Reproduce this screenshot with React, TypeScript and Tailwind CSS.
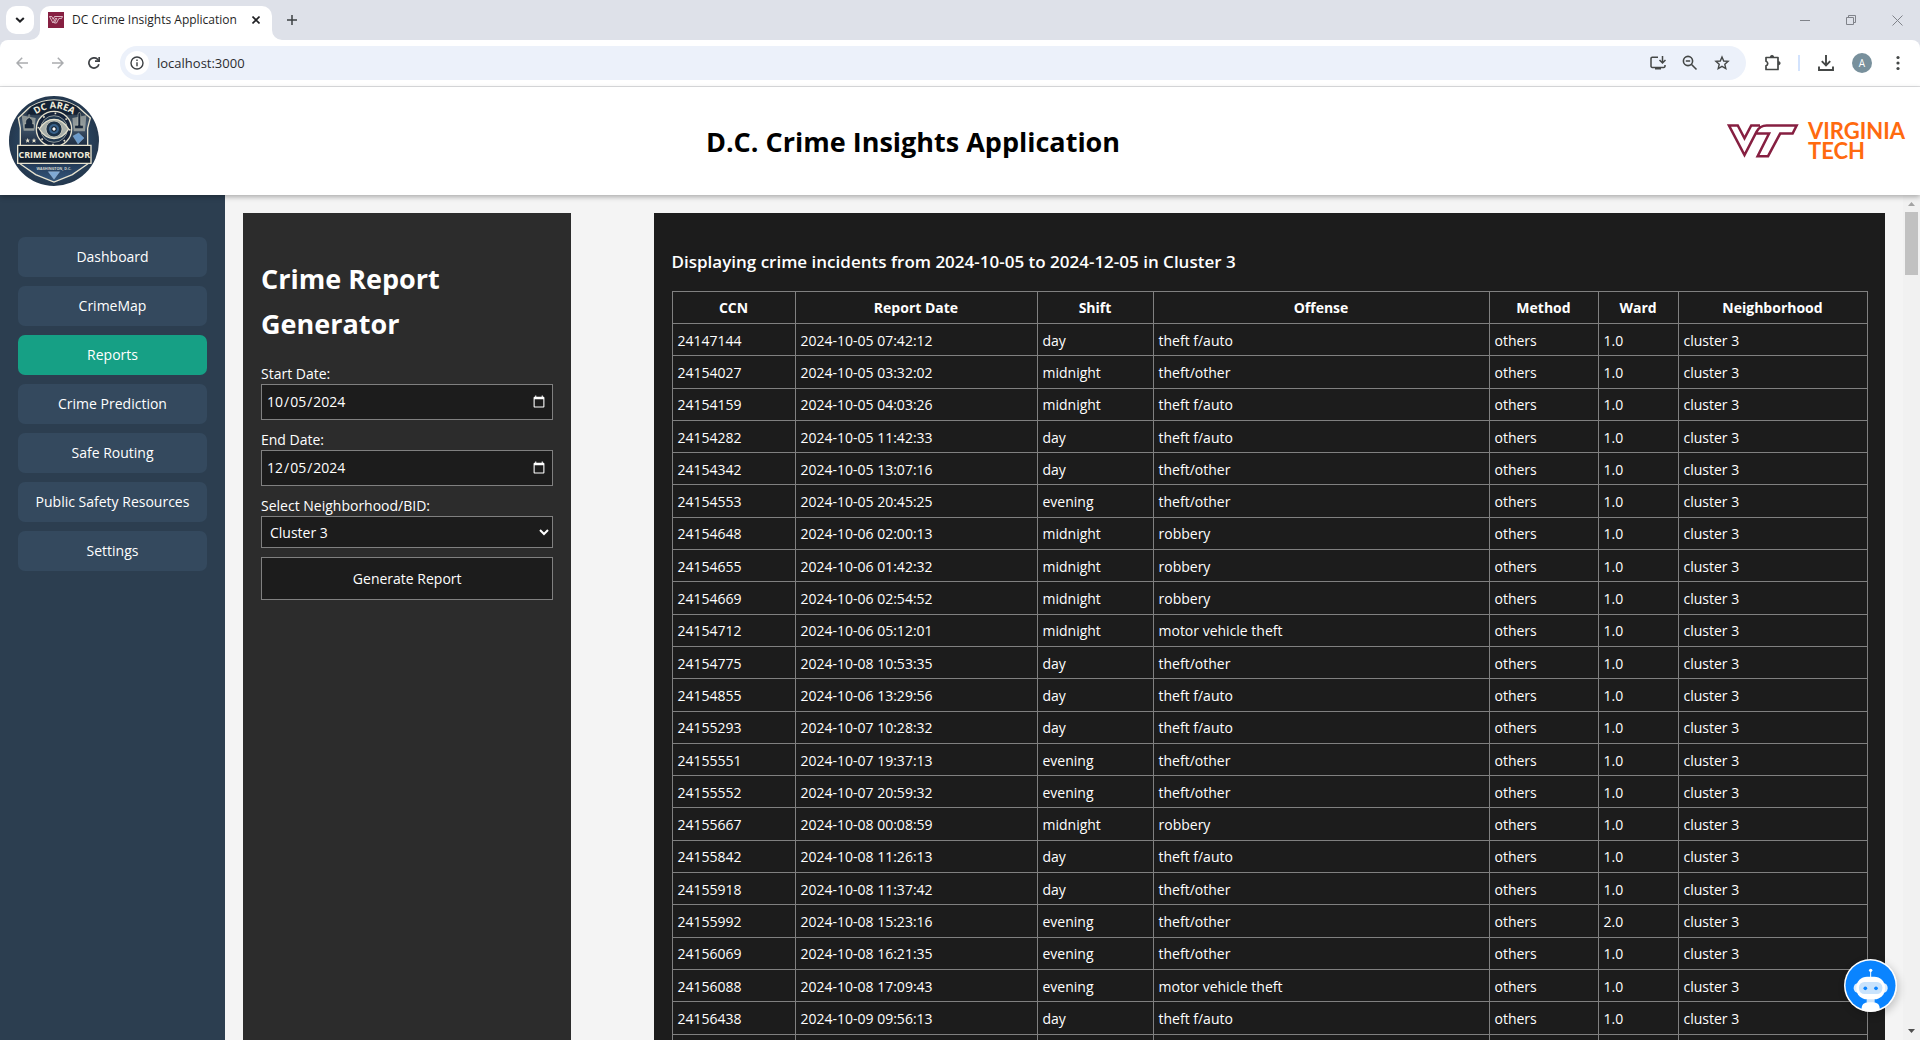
import React from "react";

const navItems = [
  "Dashboard",
  "CrimeMap",
  "Reports",
  "Crime Prediction",
  "Safe Routing",
  "Public Safety Resources",
  "Settings",
];

const columns = [
  { name: "CCN", width: "w-[123px]" },
  { name: "Report Date", width: "w-[242px]" },
  { name: "Shift", width: "w-[116px]" },
  { name: "Offense", width: "w-[336px]" },
  { name: "Method", width: "w-[109px]" },
  { name: "Ward", width: "w-[80px]" },
  { name: "Neighborhood", width: "w-[189px]" },
];

const incidents: [string, string, string, string, string][] = [
  ["24147144", "2024-10-05 07:42:12", "day", "theft f/auto", "1.0"],
  ["24154027", "2024-10-05 03:32:02", "midnight", "theft/other", "1.0"],
  ["24154159", "2024-10-05 04:03:26", "midnight", "theft f/auto", "1.0"],
  ["24154282", "2024-10-05 11:42:33", "day", "theft f/auto", "1.0"],
  ["24154342", "2024-10-05 13:07:16", "day", "theft/other", "1.0"],
  ["24154553", "2024-10-05 20:45:25", "evening", "theft/other", "1.0"],
  ["24154648", "2024-10-06 02:00:13", "midnight", "robbery", "1.0"],
  ["24154655", "2024-10-06 01:42:32", "midnight", "robbery", "1.0"],
  ["24154669", "2024-10-06 02:54:52", "midnight", "robbery", "1.0"],
  ["24154712", "2024-10-06 05:12:01", "midnight", "motor vehicle theft", "1.0"],
  ["24154775", "2024-10-08 10:53:35", "day", "theft/other", "1.0"],
  ["24154855", "2024-10-06 13:29:56", "day", "theft f/auto", "1.0"],
  ["24155293", "2024-10-07 10:28:32", "day", "theft f/auto", "1.0"],
  ["24155551", "2024-10-07 19:37:13", "evening", "theft/other", "1.0"],
  ["24155552", "2024-10-07 20:59:32", "evening", "theft/other", "1.0"],
  ["24155667", "2024-10-08 00:08:59", "midnight", "robbery", "1.0"],
  ["24155842", "2024-10-08 11:26:13", "day", "theft f/auto", "1.0"],
  ["24155918", "2024-10-08 11:37:42", "day", "theft/other", "1.0"],
  ["24155992", "2024-10-08 15:23:16", "evening", "theft/other", "2.0"],
  ["24156069", "2024-10-08 16:21:35", "evening", "theft/other", "1.0"],
  ["24156088", "2024-10-08 17:09:43", "evening", "motor vehicle theft", "1.0"],
  ["24156438", "2024-10-09 09:56:13", "day", "theft f/auto", "1.0"],
];

function TabStrip() {
  return (
    <div className="flex h-10 shrink-0 items-center bg-[#dee1e9] pl-1.5 pr-[17px]">
      <button aria-label="Search tabs" className="flex size-7 items-center justify-center rounded-[10px] bg-white">
        <svg width="10" height="6" viewBox="0 0 10 6" fill="none" stroke="#202124" strokeWidth="2">
          <path d="M1.2 1l3.8 3.6L8.800 1" />
        </svg>
      </button>
      <div className="relative ml-1.5 flex h-[34px] w-[232px] items-center self-end rounded-t-[10px] bg-white pl-2 pr-2 pb-1.5">
        <svg className="absolute bottom-0 -left-2.5" width="10" height="10" viewBox="0 0 10 10">
          <path d="M10 0v10H0A10 10 0 0 0 10 0z" fill="#fff" />
        </svg>
        <svg className="absolute bottom-0 -right-2.5" width="10" height="10" viewBox="0 0 10 10">
          <path d="M0 0v10h10A10 10 0 0 1 0 0z" fill="#fff" />
        </svg>
        <svg width="16" height="16" viewBox="0 0 16 16" fill="none">
          <rect width="16" height="16" fill="#861f41" />
          <path d="M1.500 4.500h2.300l1.400 2.800L6.500 4.500h8l-.9 1.900h-2.700L8.500 11H6.400l2.400-4.600H7.400L5 11z" stroke="#f1dfe5" strokeWidth=".8" />
        </svg>
        <span className="ml-2 flex-1 whitespace-nowrap text-[12px] leading-4 text-[#1f1f1f]">DC Crime Insights Application</span>
        <button aria-label="Close tab" className="flex size-4 items-center justify-center">
          <svg width="8" height="8" viewBox="0 0 8 8" stroke="#202124" strokeWidth="1.600">
            <path d="M.5.5l7 7M7.500.5l-7 7" />
          </svg>
        </button>
      </div>
      <button aria-label="New tab" className="ml-3 flex size-4 items-center justify-center">
        <svg width="10" height="10" viewBox="0 0 10 10" stroke="#3c4043" strokeWidth="1.500">
          <path d="M5 0v10M0 5h10" />
        </svg>
      </button>
      <div className="ml-auto flex items-center gap-9">
        <button aria-label="Minimize">
          <svg width="10" height="10" viewBox="0 0 10 10" stroke="#80838a"><path d="M0 5.500h10" /></svg>
        </button>
        <button aria-label="Restore">
          <svg width="10" height="10" viewBox="0 0 10 10" fill="none" stroke="#80838a">
            <path d="M.5 2.500h7v7h-7zM2.500 2.500v-2h7v7h-2" />
          </svg>
        </button>
        <button aria-label="Close">
          <svg width="11" height="11" viewBox="0 0 11 11" stroke="#80838a"><path d="M.5.5l10 10M10.500.5l-10 10" /></svg>
        </button>
      </div>
    </div>
  );
}

function Toolbar() {
  return (
    <div className="bg-[#dee1e9]">
      <div className="flex h-[47px] shrink-0 items-center rounded-t-[8px] border-b border-[#dfe0e2] bg-white pl-4 pr-3.5">
        <button aria-label="Back">
          <svg width="12" height="12" viewBox="0 0 12 12" fill="none" stroke="#aaacaf" strokeWidth="1.500"><path d="M12 6H1M6.200.7L1 6l5.200 5.300" /></svg>
        </button>
        <button aria-label="Forward" className="ml-6">
          <svg width="12" height="12" viewBox="0 0 12 12" fill="none" stroke="#aaacaf" strokeWidth="1.500"><path d="M0 6h11M5.800.7L11 6l-5.200 5.300" /></svg>
        </button>
        <button aria-label="Reload" className="ml-6">
          <svg width="12" height="12" viewBox="0 0 12 12" fill="none" stroke="#3f4246" strokeWidth="1.700">
            <path d="M10.900 7.300A5.100 5.100 0 1 1 9.800 2.500L11 3.700" />
            <path d="M11.200 0v4.200H7" />
          </svg>
        </button>
        <div className="ml-5 flex h-[34px] flex-1 items-center rounded-full bg-[#ecf1fa] pl-[5px] pr-4">
          <button aria-label="View site information" className="flex size-6 items-center justify-center rounded-full bg-white">
            <svg width="14" height="14" viewBox="0 0 14 14" fill="none" stroke="#3c4043" strokeWidth="1.400">
              <circle cx="7" cy="7" r="6" />
              <path d="M7 6.200v4M7 3.600v1.500" />
            </svg>
          </button>
          <input aria-label="Address" defaultValue="localhost:3000" className="ml-2 min-w-0 flex-1 bg-transparent text-[13px] leading-5 text-[#2b2c2f] outline-none" />
          <div className="flex items-center gap-4 text-[#444746]">
            <button aria-label="Install app">
              <svg width="16" height="16" viewBox="0 0 16 16" fill="none" stroke="currentColor" strokeWidth="1.500">
                <path d="M8 2.300H2.200a1.200 1.200 0 0 0-1.200 1.200v7.700a1.200 1.200 0 0 0 1.200 1.200h11.600a1.200 1.200 0 0 0 1.200-1.200V10" />
                <path d="M12.500 1v6.500M9.500 5l3 3 3-3" />
                <path d="M5 13.500h6" strokeWidth="2" />
              </svg>
            </button>
            <button aria-label="Zoom">
              <svg width="16" height="16" viewBox="0 0 16 16" fill="none" stroke="currentColor" strokeWidth="1.600">
                <circle cx="6" cy="6" r="4.600" />
                <path d="M3.800 6h4.400M9.300 9.300l5.200 5.200" />
              </svg>
            </button>
            <button aria-label="Bookmark this tab">
              <svg width="16" height="16" viewBox="0 0 16 16" fill="none" stroke="currentColor" strokeWidth="1.400">
                <path d="M8 2l1.700 4 4.400.4-3.300 2.900 1 4.300L8 11.300l-3.800 2.300 1-4.300-3.300-2.900L6.300 6z" />
              </svg>
            </button>
          </div>
        </div>
        <div className="ml-4 flex items-center text-[#444746]">
          <button aria-label="Extensions">
            <svg width="20" height="20" viewBox="0 0 20 20" fill="none" stroke="currentColor" strokeWidth="1.700">
              <path d="M4 4.500h12v12H4v-3.700a2.400 2.400 0 0 0 0-4.600z" strokeLinejoin="round" />
              <path d="M8.300 4a1.700 1.700 0 0 1 3.400 0zM16.500 8.500a1.700 1.700 0 0 1 0 3.400z" fill="currentColor" strokeWidth=".8" />
            </svg>
          </button>
          <div className="ml-4 h-4 w-0.5 bg-[#d3e3fd]" />
          <button aria-label="Downloads" className="ml-[18px]">
            <svg width="16" height="16" viewBox="0 0 16 16" fill="none" stroke="currentColor" strokeWidth="1.900">
              <path d="M8 0v10M3.800 6.200L8 10.400l4.200-4.200M1 11.500V15h14v-3.500" />
            </svg>
          </button>
          <button aria-label="Profile" className="ml-[18px] flex size-5 items-center justify-center rounded-full bg-[#78909c] text-[10px] leading-5 text-white">A</button>
          <button aria-label="Menu" className="ml-[18px] flex w-4 justify-center">
            <svg width="4" height="16" viewBox="0 0 4 16" fill="currentColor">
              <circle cx="2" cy="2.500" r="1.600" /><circle cx="2" cy="8" r="1.600" /><circle cx="2" cy="13.500" r="1.600" />
            </svg>
          </button>
        </div>
      </div>
    </div>
  );
}

function Badge() {
  return (
    <svg width="90" height="90" viewBox="0 0 270 270" role="img" aria-label="DC Area Crime Monitor" fontFamily='"Open Sans", sans-serif'>
      <defs>
        <radialGradient id="badgeSky"><stop offset=".55" stopColor="#2c4a68" /><stop offset="1" stopColor="#24384e" /></radialGradient>
        <linearGradient id="badgeShield" x1="0" y1="0" x2="0" y2="1"><stop offset="0" stopColor="#101a28" /><stop offset=".3" stopColor="#44596e" /><stop offset=".6" stopColor="#16243a" /><stop offset="1" stopColor="#34577d" /></linearGradient>
        <path id="badgeArc" d="M64 68Q135 6 208 68" />
      </defs>
      <circle cx="135" cy="135" r="135" fill="url(#badgeSky)" />
      <path d="M28 66L62 34Q135-10 208 34l36 32-8 30v108l-46 32-55 22-55-22-46-32V96z" fill="url(#badgeShield)" stroke="#e8e3cf" strokeWidth="4" />
      <path d="M66 32Q135-6 204 32l14 24H52z" fill="#142133" />
      <g fill="#e0ddcb">
        <path d="M38 58l42 8-4 38H44z" opacity=".5" />
        <path d="M190 66l42-8-4 48h-34z" opacity=".5" />
      </g>
      <path d="M46 98V84h4a12 16 0 0 1 9-18V56h3v10a12 16 0 0 1 9 18h4v14z" fill="#1a293c" stroke="#c9cbbb" strokeWidth="1.500" />
      <path d="M207 88V54l4-6 4 6v34h8v10h-26V88z" fill="#1a293c" stroke="#c9cbbb" strokeWidth="1.500" />
      <circle cx="135" cy="99" r="53" fill="#16243a" stroke="#e8e3cf" strokeWidth="4" />
      <circle cx="135" cy="99" r="47" fill="none" stroke="#e8e3cf" strokeWidth="5" strokeDasharray="5 32" />
      <circle cx="135" cy="99" r="40" fill="#21374e" stroke="#c5c9be" strokeWidth="2" />
      <path d="M91 99q18-29 44-29t44 29q-18 29-44 29T91 99z" fill="#a7aea9" stroke="#e8e3cf" strokeWidth="4" />
      <circle cx="135" cy="99" r="24" fill="#1b3148" stroke="#e8e3cf" strokeWidth="2" />
      <circle cx="135" cy="99" r="15" fill="#38618a" />
      <circle cx="135" cy="99" r="8" fill="#101a28" />
      <circle cx="135" cy="99" r="5" fill="#fff" />
      <text fontSize="28" fontWeight="700" fill="#f0ecdb"><textPath href="#badgeArc" startOffset="50%" textAnchor="middle">DC AREA</textPath></text>
      <path d="M56 126l2 5h5l-4 3 2 6-5-3-5 3 2-6-4-3h5zM75 126l2 5h5l-4 3 2 6-5-3-5 3 2-6-4-3h5z" fill="#e8e3cf" />
      <path d="M192 120l17-9 16 15-18 18z" fill="#6c9bcb" stroke="#a5c4e0" />
      <path d="M26 148h220v54H26z" fill="#14202f" stroke="#e8e3cf" strokeWidth="4" />
      <text x="136" y="185" textAnchor="middle" fontSize="27" fontWeight="700" fill="#f0ecdb">CRIME MONTOR</text>
      <text x="135" y="221" textAnchor="middle" fontSize="11" fontWeight="700" fill="#d7dad0">WASHINGTON, D.C.</text>
      <path d="M118 227h34l-17 23z" fill="#7fa9d4" stroke="#c2d6e8" />
    </svg>
  );
}

function VirginiaTechLogo() {
  return (
    <div className="flex items-center gap-[9px]">
      <svg width="72" height="34" viewBox="24 28 214 100" fill="none" stroke="#861f41" strokeWidth="7.500" role="img" aria-label="VT">
        <path d="M122 32H96L76 70L56 32H30L76 120L112 50Q122 32 142 32H231L219 56H182L146 123H115L149 56H109" />
      </svg>
      <div className="min-w-[103px] font-['Lato','Open_Sans',sans-serif] text-[22px] font-bold leading-5 text-[#ff6a0f]">
        <div>VIRGINIA</div>
        <div>TECH</div>
      </div>
    </div>
  );
}

function Header() {
  return (
    <header className="z-10 flex h-[108px] shrink-0 items-center justify-between bg-white px-[9px] shadow-[0_2px_5px_rgba(0,0,0,0.3)]">
      <Badge />
      <h1 className="pt-0.5 text-[27px] font-bold leading-10 text-black">D.C. Crime Insights Application</h1>
      <VirginiaTechLogo />
    </header>
  );
}

function Sidebar() {
  return (
    <nav className="flex w-[225px] shrink-0 flex-col gap-[9px] bg-[#2c3e50] px-[18px] pt-[42px]">
      {navItems.map((item) => (
        <button
          key={item}
          aria-current={item === "Reports" ? "page" : undefined}
          className={
            item === "Reports"
              ? "h-10 shrink-0 rounded-[7px] bg-[#16a085] text-[14px] leading-5 text-white"
              : "h-10 shrink-0 rounded-[7px] bg-[#34495e] text-[14px] leading-5 text-white"
          }
        >
          {item}
        </button>
      ))}
    </nav>
  );
}

function ReportForm() {
  return (
    <form className="flex w-1/5 flex-col bg-[#2c2c2c] px-[18px] pt-[43px] text-[14px] leading-5" onSubmit={(e) => e.preventDefault()}>
      <h2 className="text-[27px] font-bold leading-[45px]">Crime Report Generator</h2>
      <label htmlFor="start" className="mt-[18px]">Start Date:</label>
      <input id="start" type="date" defaultValue="2024-10-05" className="h-9 border border-[#808080] bg-[#1c1c1c] px-1 scheme-dark" />
      <label htmlFor="end" className="mt-[10px]">End Date:</label>
      <input id="end" type="date" defaultValue="2024-12-05" className="h-9 border border-[#808080] bg-[#1c1c1c] px-1 scheme-dark" />
      <label htmlFor="area" className="mt-[10px]">Select Neighborhood/BID:</label>
      <select id="area" className="h-8 border border-[#808080] bg-[#1c1c1c] px-1 scheme-dark">
        <option>Cluster 3</option>
      </select>
      <button type="submit" className="mt-[9px] h-[43px] border border-[#808080] bg-[#1c1c1c]">Generate Report</button>
    </form>
  );
}

function Report() {
  return (
    <section className="w-3/4 bg-[#1c1c1c] px-[18px] pt-[35px]">
      <h3 className="text-[17px] font-semibold leading-7">Displaying crime incidents from 2024-10-05 to 2024-12-05 in Cluster 3</h3>
      <table className="mt-[15px] h-[776px] w-full table-fixed border-collapse text-[14px] leading-5">
        <thead>
          <tr className="h-8">
            {columns.map((c) => (
              <th key={c.name} scope="col" className={`${c.width} border border-[#808080] px-1 font-bold`}>{c.name}</th>
            ))}
          </tr>
        </thead>
        <tbody>
          {incidents.map(([ccn, date, shift, offense, ward]) => (
            <tr key={ccn} className="h-8">
              {[ccn, date, shift, offense, "others", ward, "cluster 3"].map((value, i) => (
                <td key={i} className="border border-[#808080] px-[5px] pt-0.5">{value}</td>
              ))}
            </tr>
          ))}
          <tr className="h-8">
            {columns.map((c) => (
              <td key={c.name} className="border border-[#808080]" />
            ))}
          </tr>
        </tbody>
      </table>
    </section>
  );
}

function ScrollBar() {
  return (
    <div className="flex w-[17px] shrink-0 flex-col items-center justify-between bg-[#f1f1f1]">
      <div className="flex flex-col items-center">
        <svg width="17" height="17" viewBox="0 0 17 17"><path d="M5 11l3.500-4 3.500 4z" fill="#a3a3a3" /></svg>
        <div className="h-[63px] w-[13px] bg-[#c1c1c1]" />
      </div>
      <svg width="17" height="17" viewBox="0 0 17 17"><path d="M5 6l3.500 4L12 6z" fill="#505050" /></svg>
    </div>
  );
}

function ChatButton() {
  return (
    <button aria-label="Open chat" className="absolute bottom-[28px] right-[23px] size-[53px] rounded-full shadow-[2px_3px_8px_rgba(0,0,0,0.2)]">
      <svg width="53" height="53" viewBox="0 0 159 159">
        <defs><clipPath id="chatClip"><circle cx="79.500" cy="79.500" r="79" /></clipPath></defs>
        <circle cx="79.500" cy="79.500" r="79.500" fill="#fff" />
        <circle cx="79.500" cy="79.500" r="75" fill="#0a84ff" />
        <g clipPath="url(#chatClip)">
          <path d="M80 36v22" stroke="#fff" strokeWidth="3" />
          <circle cx="80" cy="34" r="5" fill="#fff" />
          <rect x="68" y="116" width="24" height="18" fill="#cfe5fb" />
          <path d="M52 160v-8q0-22 22-22h12q22 0 22 22v8z" fill="#fff" />
          <rect x="29" y="73" width="102" height="28" rx="13" fill="#e1effd" />
          <rect x="37" y="53" width="86" height="68" rx="32" fill="#fff" />
          <rect x="45" y="69" width="70" height="36" rx="16" fill="#c9e3fc" />
          <circle cx="64" cy="88" r="5.500" fill="#0a84ff" />
          <circle cx="96" cy="88" r="5.500" fill="#0a84ff" />
        </g>
      </svg>
    </button>
  );
}

export default function App() {
  return (
    <div className="relative flex h-screen flex-col overflow-hidden font-['Open_Sans','Noto_Sans',sans-serif]">
      <TabStrip />
      <Toolbar />
      <Header />
      <div className="flex min-h-0 flex-1">
        <Sidebar />
        <main className="flex min-w-0 flex-1 justify-between overflow-hidden bg-[#f4f4f4] px-[18px] pt-[18px] text-white">
          <ReportForm />
          <Report />
        </main>
        <ScrollBar />
      </div>
      <ChatButton />
    </div>
  );
}
